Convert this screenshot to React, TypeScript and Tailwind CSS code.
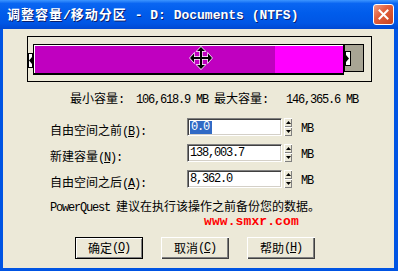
import React from 'react';

const cjk = "font-['Noto_Sans_CJK_SC',sans-serif] text-[12px]";
const asc = "font-['Liberation_Mono','Noto_Sans_CJK_SC',monospace] text-[12px] tracking-[-1.2px]";

// splits text into ascii / cjk runs so each gets its own font
function Mx({ s }: { s: string }) {
    const runs = s.match(/[\u0000-\u00ff]+|[^\u0000-\u00ff]+/g) ?? [];
    return (
        <>
            {runs.map((r, i) =>
                r.charCodeAt(0) < 256
                    ? <span key={i} className={asc}>{r}</span>
                    : <span key={i} className={cjk}>{r}</span>
            )}
        </>
    );
}

const Tri = ({ dir }: { dir: 'up' | 'down' }) => (
    <svg width="5" height="3" viewBox="0 0 5 3">
        <polygon points={dir === 'up' ? '2.5,0 5,3 0,3' : '0,0 5,0 2.5,3'} fill="#000" />
    </svg>
);

function Spinner() {
    return (
        <div className="ml-[2px] flex h-[18px] w-[8px] flex-col">
            <div className="flex h-[9px] items-center justify-center bg-[#ECE9D8] shadow-[inset_1px_1px_0_#fff,inset_-1px_-1px_0_#808080]">
                <Tri dir="up" />
            </div>
            <div className="flex h-[9px] items-center justify-center bg-[#ECE9D8] shadow-[inset_1px_1px_0_#fff,inset_-1px_-1px_0_#808080]">
                <Tri dir="down" />
            </div>
        </div>
    );
}

type RowProps = { label: string; hot: string; value: string; selected?: boolean };

function Row({ label, hot, value, selected }: RowProps) {
    return (
        <div className="flex h-[18px] items-start pl-[47px]">
            <div className="mt-[5px] w-[137px] whitespace-pre leading-[12px] text-black">
                <span className={cjk}>{label}</span>
                <span className={asc}>(<u>{hot}</u>):</span>
            </div>
            <div className="flex h-[18px] w-[95px] items-center border border-b-white border-l-[#808080] border-r-white border-t-[#808080] bg-white pl-[2px] shadow-[inset_1px_1px_0_#404040,inset_-1px_-1px_0_#D4D0C8]">
                {selected ? (
                    <span className={`${asc} bg-[#316AC5] pl-[1px] pr-[3px] leading-[13px] text-white`}>{value}</span>
                ) : (
                    <span className={`${asc} leading-[13px] text-black`}>{value}</span>
                )}
            </div>
            <Spinner />
            <span className={`${asc} ml-[9px] mt-[5px] leading-[12px] text-black`}>MB</span>
        </div>
    );
}

function Btn({ label, hot, isDefault }: { label: string; hot: string; isDefault?: boolean }) {
    return (
        <div
            className={`flex h-[22px] w-[68px] items-center justify-center whitespace-pre bg-[#ECE9D8] leading-[12px] text-black ${
                isDefault
                    ? 'border border-black shadow-[inset_1px_1px_0_#fff,inset_-1px_-1px_0_#808080]'
                    : 'shadow-[inset_1px_1px_0_#fff,inset_-1px_-1px_0_#404040,inset_-2px_-2px_0_#808080]'
            }`}
        >
            <span className={cjk}>{label}</span>
            <span className={asc}>(<u>{hot}</u>)</span>
        </div>
    );
}

function MoveCursor() {
    return (
        <svg width="24" height="24" viewBox="0 0 24 24" className="absolute left-[155px] top-[1px]">
            <polygon
                points="12,1 16,5 13,5 13,11 19,11 19,7.5 23,12 19,16.5 19,13 13,13 13,19 16,19 12,23 8,19 11,19 11,13 5,13 5,16.5 1,12 5,7.5 5,11 11,11 11,5 8,5"
                fill="#000"
                stroke="#fff"
                strokeWidth="1.3"
                strokeLinejoin="miter"
                paintOrder="stroke"
            />
        </svg>
    );
}

export default function App() {
    return (
        <div className="flex h-[271px] w-[398px] flex-col overflow-hidden bg-[#0054E3]">
            {/* title bar */}
            <div className="flex h-[29px] items-center justify-between bg-[linear-gradient(to_bottom,#3D95FF_0%,#0A66F2_12%,#005CEB_45%,#0056E5_80%,#0048D2_100%)] pl-[7px] pr-[4px]">
                <div className="whitespace-pre font-bold leading-[14px] text-white [text-shadow:1px_1px_0_#0A1E6E]">
                    <span className="font-['Noto_Sans_CJK_SC',sans-serif] text-[13px] tracking-[1px]">调整容量</span>
                    <span className="font-['Liberation_Mono',monospace] text-[13px]">/</span>
                    <span className="font-['Noto_Sans_CJK_SC',sans-serif] text-[13px] tracking-[1px]">移动分区</span>
                    <span className="font-['Liberation_Mono',monospace] text-[13px]"> - D: Documents (NTFS)</span>
                </div>
                <div className="flex h-[21px] w-[21px] items-center justify-center rounded-[3px] border border-white bg-[linear-gradient(135deg,#F0A088_0%,#E2603E_40%,#C8421F_100%)]">
                    <svg width="11" height="11" viewBox="0 0 11 11">
                        <path d="M1.5 1.5 L9.5 9.5 M9.5 1.5 L1.5 9.5" stroke="#fff" strokeWidth="2" strokeLinecap="square" />
                    </svg>
                </div>
            </div>

            {/* client */}
            <div className="flex flex-1 flex-col pb-[3px] pl-[3px] pr-[4px]">
                <div className="flex flex-1 flex-col bg-[#ECE9D8] pt-[7px]">
                    {/* partition bar */}
                    <div className="ml-[24px] flex h-[46px] w-[345px] items-start border border-black pt-[7px]">
                        <div className="mt-[9px] flex h-[15px] w-[5px] items-center border border-black bg-white">
                            <svg width="3" height="7" viewBox="0 0 3 7"><polygon points="0,3.5 3,0 3,7" fill="#000" /></svg>
                        </div>
                        <div className="relative flex h-[31px] w-[311px] border border-b-2 border-black shadow-[inset_1px_1px_0_#fff]">
                            <div className="ml-[1px] mt-[1px] w-[240px] bg-[#C000C0]" />
                            <div className="mt-[1px] flex-1 bg-[#FF00FF]" />
                            <MoveCursor />
                        </div>
                        <div className="flex h-[28px] w-[20px] items-center border border-black bg-[#A8A594]">
                            <div className="flex h-[15px] w-[6px] items-center border border-black bg-white">
                                <svg width="3" height="7" viewBox="0 0 3 7"><polygon points="0,0 3,3.5 0,7" fill="#000" /></svg>
                            </div>
                        </div>
                    </div>

                    {/* min / max */}
                    <div className="mt-[9px] h-[12px] whitespace-pre pl-[67px] leading-[12px] text-black">
                        <Mx s="最小容量:  106,618.9 MB 最大容量:   146,365.6 MB" />
                    </div>

                    <div className="mt-[15px] flex flex-col gap-[8px]">
                        <Row label="自由空间之前" hot="B" value="0.0" selected />
                        <Row label="新建容量" hot="N" value="138,003.7" />
                        <Row label="自由空间之后" hot="A" value="8,362.0" />
                    </div>

                    <div className="mt-[11px] h-[12px] whitespace-pre pl-[47px] leading-[12px] text-black">
                        <Mx s="PowerQuest 建议在执行该操作之前备份您的数据。" />
                    </div>

                    <div className="mt-[4px] h-[14px] pl-[201px] font-['Liberation_Mono',monospace] text-[13px] font-bold leading-[14px] tracking-[0.1px] text-[#FF0000]">
                        www.smxr.com
                    </div>

                    <div className="mt-[8px] flex gap-[18px] pl-[72px]">
                        <Btn label="确定" hot="O" isDefault />
                        <Btn label="取消" hot="C" />
                        <Btn label="帮助" hot="H" />
                    </div>
                </div>
            </div>
        </div>
    );
}
